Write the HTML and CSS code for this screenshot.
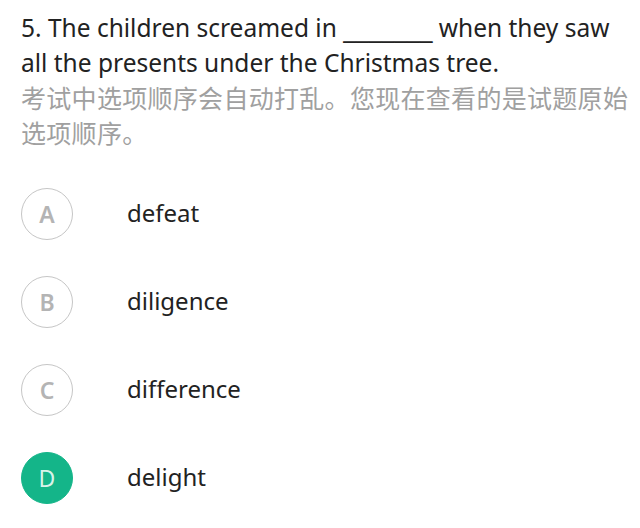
FILE: index.html
```html
<!DOCTYPE html>
<html lang="en">
<head>
<meta charset="utf-8">
<link rel="stylesheet" href="styles.css">
</head>
<body>
<div class="page">
  <div class="question">
    <p class="stem">5. The children screamed in <span class="blank">_______</span> when they saw<br>all the presents under the Christmas tree.</p>
    <p class="note">考试中选项顺序会自动打乱。您现在查看的是试题原始选项顺序。</p>
  </div>
  <ul class="options">
    <li class="option"><span class="badge">A</span><span class="label">defeat</span></li>
    <li class="option"><span class="badge">B</span><span class="label">diligence</span></li>
    <li class="option"><span class="badge">C</span><span class="label">difference</span></li>
    <li class="option selected"><span class="badge">D</span><span class="label">delight</span></li>
  </ul>
</div>
</body>
</html>
```
FILE: styles.css
```css
html, body {
  margin: 0;
  padding: 0;
  background: #ffffff;
}
body {
  font-family: "Noto Sans", "Noto Sans CJK SC", sans-serif;
  color: #222222;
}
.page {
  padding: 10px 4px 0 21px;
}
.stem {
  margin: 0;
  font-size: 24.5px;
  line-height: 35px;
  color: #222222;
}
.blank {
  font-family: "DejaVu Sans", sans-serif;
  font-size: 25.5px;
  line-height: 1;
}
.note {
  margin: 0;
  font-family: "Noto Sans CJK SC", sans-serif;
  font-size: 25px;
  line-height: 35px;
  color: #a0a0a0;
  letter-spacing: 0.3px;
}
.options {
  list-style: none;
  margin: 38px 0 0;
  padding: 0;
  display: flex;
  flex-direction: column;
  gap: 36px;
}
.option {
  display: flex;
  align-items: center;
  height: 52px;
}
.badge {
  box-sizing: border-box;
  width: 52px;
  height: 52px;
  border-radius: 50%;
  border: 1.5px solid #c6c6c6;
  color: #b4b4b4;
  font-size: 23px;
  font-weight: 600;
  display: flex;
  align-items: center;
  justify-content: center;
}
.selected .badge {
  background: #14b589;
  border-color: #14b589;
  color: #d8f3ea;
  font-weight: 400;
}
.label {
  margin-left: 54px;
  padding-bottom: 4px;
  font-size: 24px;
  color: #222222;
}
```
